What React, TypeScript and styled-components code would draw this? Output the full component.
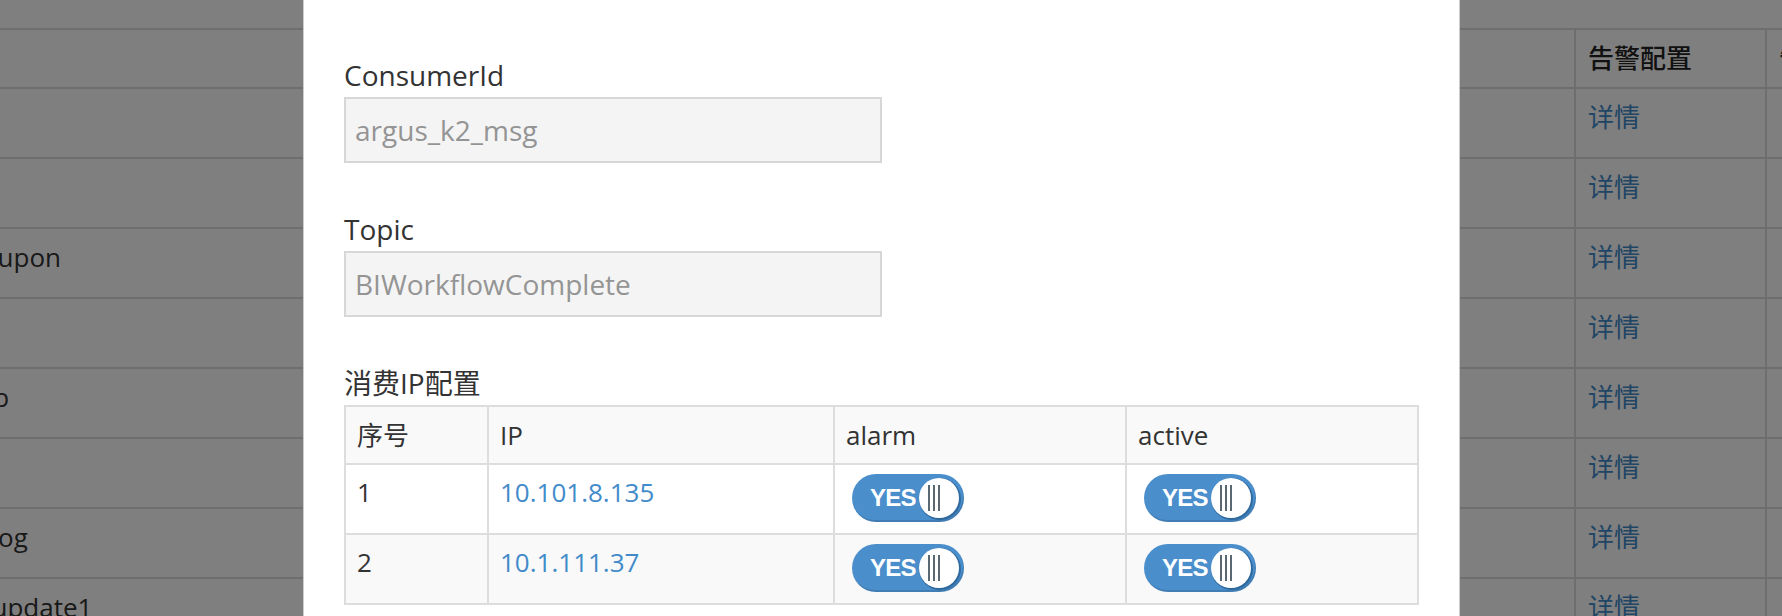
import React from 'react';
import styled, { createGlobalStyle } from 'styled-components';

// 배경 목록과 위에 뜬 소비자 설정 모달
interface BackRow {
  name: string;
}

interface IpRow {
  no: number;
  ip: string;
  alarm: boolean;
  active: boolean;
}

const backRows: BackRow[] = [
  { name: 'argus_bi' },
  { name: 'argus_k2' },
  { name: 'argus_icoupon' },
  { name: 'argus_ad' },
  { name: 'argus_app' },
  { name: 'argus_im' },
  { name: 'argus_k2log' },
  { name: 'argus_k2update1' },
];

const ipRows: IpRow[] = [
  { no: 1, ip: '10.101.8.135', alarm: true, active: true },
  { no: 2, ip: '10.1.111.37', alarm: true, active: true },
];

const GlobalStyle = createGlobalStyle`
  html, body {
    margin: 0;
    padding: 0;
  }
  body {
    width: 1782px;
    height: 616px;
    overflow: hidden;
    background: #fff;
    color: #333;
    font-family: "Open Sans", "Noto Sans CJK SC", sans-serif;
  }
`;

const Toggle: React.FC<{ on: boolean }> = ({ on }) => (
  <Switch $on={on}>
    <SwitchText>{on ? 'YES' : 'NO'}</SwitchText>
    <Knob>
      <Grip />
      <Grip />
      <Grip />
    </Knob>
  </Switch>
);

const App: React.FC = () => {
  return (
    <Page>
      <GlobalStyle />
      <BackList>
        <BackTable>
          <colgroup>
            <col style={{ width: 830 }} />
            <col style={{ width: 874 }} />
            <col style={{ width: 191 }} />
            <col style={{ width: 220 }} />
          </colgroup>
          <thead>
            <tr>
              <th>消费者</th>
              <th>Topic</th>
              <th>告警配置</th>
              <th>告警人</th>
            </tr>
          </thead>
          <tbody>
            {backRows.map((row) => (
              <tr key={row.name}>
                <td>{row.name}</td>
                <td></td>
                <td>
                  <BackLink>详情</BackLink>
                </td>
                <td></td>
              </tr>
            ))}
          </tbody>
        </BackTable>
      </BackList>

      <Overlay>
        <Modal>
          <FormGroup>
            <Label>ConsumerId</Label>
            <Field readOnly value="argus_k2_msg" />
          </FormGroup>
          <FormGroup>
            <Label>Topic</Label>
            <Field readOnly value="BIWorkflowComplete" />
          </FormGroup>
          <FormGroup>
            <Label>消费IP配置</Label>
            <IpTable>
              <colgroup>
                <col style={{ width: 143 }} />
                <col style={{ width: 346 }} />
                <col style={{ width: 292 }} />
                <col />
              </colgroup>
              <thead>
                <tr>
                  <th>序号</th>
                  <th>IP</th>
                  <th>alarm</th>
                  <th>active</th>
                </tr>
              </thead>
              <tbody>
                {ipRows.map((row) => (
                  <tr key={row.no}>
                    <td>{row.no}</td>
                    <td>
                      <IpLink>{row.ip}</IpLink>
                    </td>
                    <td>
                      <Toggle on={row.alarm} />
                    </td>
                    <td>
                      <Toggle on={row.active} />
                    </td>
                  </tr>
                ))}
              </tbody>
            </IpTable>
          </FormGroup>
        </Modal>
      </Overlay>
    </Page>
  );
};

const Page = styled.div`
  position: relative;
  width: 1782px;
  height: 616px;
  overflow: hidden;
`;

const BackList = styled.div`
  padding-top: 28px;
  margin-left: -130px;
`;

const BackTable = styled.table`
  width: 2115px;
  border-collapse: collapse;
  table-layout: fixed;
  font-size: 26px;
  line-height: 37px;

  th,
  td {
    border: 2px solid #ddd;
    text-align: left;
    vertical-align: top;
    white-space: nowrap;
    overflow: hidden;
  }

  th {
    padding: 10px 12px;
    font-weight: 500;
    color: #222;
  }

  td {
    padding: 10px 12px 21px;
  }
`;

const BackLink = styled.a`
  color: #428bca;
  text-decoration: none;
`;

const Overlay = styled.div`
  position: absolute;
  inset: 0;
  padding-left: 303px;
  background: rgba(0, 0, 0, 0.5);
`;

const Modal = styled.div`
  width: 1157px;
  min-height: 700px;
  box-sizing: border-box;
  padding: 57px 40px 0;
  background: #fff;
  border: 1px solid rgba(0, 0, 0, 0.2);
  border-top: 0;
`;

const FormGroup = styled.div`
  margin-bottom: 48px;
`;

const Label = styled.label`
  display: block;
  margin-bottom: 4px;
  font-size: 28px;
  line-height: 36px;
  color: #333;
`;

const Field = styled.input`
  display: block;
  width: 50%;
  height: 66px;
  box-sizing: border-box;
  padding: 0 9px;
  border: 2px solid #d7d7d7;
  background: #f4f4f4;
  color: #949494;
  font-family: "Open Sans", "Noto Sans CJK SC", sans-serif;
  font-size: 28px;
  outline: none;
`;

const IpTable = styled.table`
  width: 100%;
  border-collapse: collapse;
  table-layout: fixed;
  font-size: 26px;
  line-height: 37px;

  th,
  td {
    border: 2px solid #ddd;
    text-align: left;
    vertical-align: top;
  }

  th {
    padding: 10px 11px 9px;
    font-weight: 400;
    background: #f9f9f9;
  }

  td {
    padding: 9px 11px 11px;
    background: #fff;
  }

  tbody tr:nth-child(even) td {
    background: #f9f9f9;
  }
`;

const IpLink = styled.a`
  color: #428bca;
  text-decoration: none;
`;

const Switch = styled.span<{ $on: boolean }>`
  display: inline-flex;
  align-items: center;
  width: 112px;
  height: 48px;
  margin-left: 6px;
  box-sizing: border-box;
  padding: 0 5px 0 18px;
  border-radius: 24px;
  background: ${(p) => (p.$on ? '#4a8ecc' : '#c8c8c8')};
  box-shadow: inset -1px -2px 0 rgba(0, 0, 0, 0.12);
  vertical-align: top;
`;

const SwitchText = styled.span`
  flex: 1;
  color: #fff;
  font-family: "Liberation Sans", Arial, sans-serif;
  font-weight: 700;
  font-size: 24px;
  letter-spacing: -0.8px;
  line-height: 1;
`;

const Knob = styled.span`
  display: flex;
  align-items: center;
  justify-content: center;
  gap: 3px;
  width: 40px;
  height: 40px;
  box-sizing: border-box;
  padding-right: 10px;
  border-radius: 50%;
  background: #fff;
  box-shadow: 1px 1px 0 1px #2f6a9f;
`;

const Grip = styled.i`
  width: 2px;
  height: 26px;
  background: #5a6872;
`;

export default App;
